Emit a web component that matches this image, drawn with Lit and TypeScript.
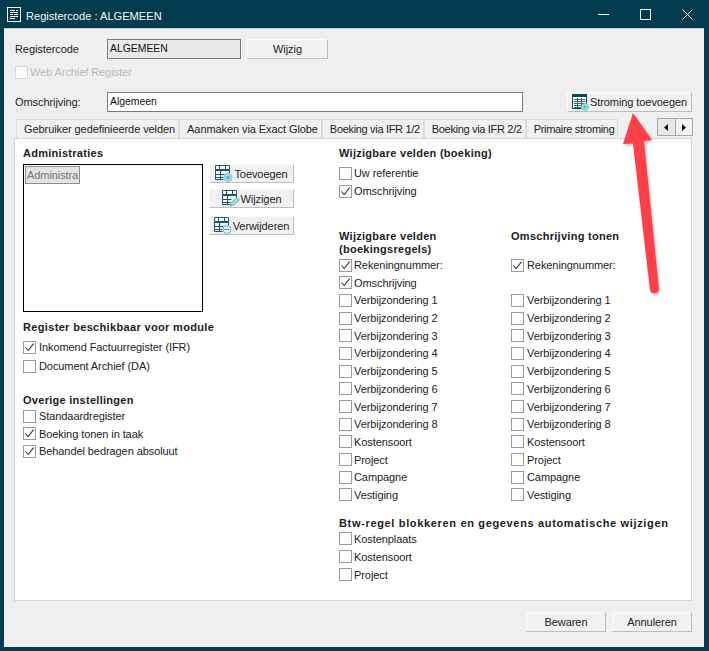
import { LitElement, html, css, svg } from "lit";
import { customElement } from "lit/decorators.js";

const denseIcon = () => html`<svg width="17" height="17" viewBox="0 0 17 17">
  <rect x=".5" y=".5" width="14" height="14" fill="#fff" stroke="#0d4a5c"/>
  <rect x="1" y="1" width="13" height="2" fill="#0d4a5c"/>
  <path d="M2 5.5h11M2 7.5h11M2 9.5h11M2 11.5h11M2 13.5h11M5.5 4v10M9.5 4v10" stroke="#2f6678" fill="none"/>
  <circle cx="13" cy="13" r="3.5" fill="#a5dde4" stroke="#7ccbd5"/>
  <circle cx="13" cy="13" r="1.5" fill="#56b5c3"/>
</svg>`;

const lineIcon = (badge: "plus" | "pen" | "minus") => html`<svg width="18" height="17" viewBox="0 0 18 17">
  <path d="M.5 .5h14v4h-14zM.5 4.5v10h8M14.5 4.5v4M.5 5.5h14M.5 9.5h9M.5 12.5h8M5.5 5.5v9M4.5 .5v4M10.5 .5v4" fill="#fff" stroke="#1e5668"/>
  ${badge === "plus" ? svg`<circle cx="13" cy="12.5" r="4" fill="#a5dde4" stroke="#7ccbd5"/><circle cx="13" cy="12.5" r="1.7" fill="#56b5c3"/>` : ""}
  ${badge === "minus" ? svg`<circle cx="13" cy="12.5" r="4" fill="#e4f5f7" stroke="#62bbc8"/><path d="M10.5 12.5h5" stroke="#3a98a8"/>` : ""}
  ${badge === "pen" ? svg`<path d="M8.5 16l1-3.5 5.5-5 2.3 2.4-5.4 5z" fill="#a5dde4" stroke="#69b2c0"/>` : ""}
</svg>`;

@customElement("app-root")
export class AppRoot extends LitElement {
  static styles = css`
    :host { display: block; width: 709px; height: 651px; background: #003c4e; position: relative; overflow: hidden;
      font-family: "Liberation Sans", Arial, sans-serif; font-size: 11px; letter-spacing: -0.08px; color: #222; }
    .title { height: 28px; display: flex; align-items: center; color: #f4f8f9; font-size: 11.1px; letter-spacing: 0; padding-left: 7px; gap: 4px; }
    .title .name { flex: 1; padding-top: 3px; }
    .ticon { margin-top: 2px; }
    .ctl { width: 42px; height: 28px; display: flex; align-items: center; justify-content: center; }
    .ctls { display: flex; margin-right: 1px; }
    .win { margin: 0 5px 0 4px; height: 619px; background: #efefef; border-top: 1px solid #c8c8c8; box-sizing: border-box; padding: 10px 12px 0 10px; display: flex; flex-direction: column; }
    .r1 { display: flex; align-items: center; height: 20px; padding-left: 1px; }
    .lab { width: 92px; }
    .ro { width: 134px; height: 20px; box-sizing: border-box; border: 1px solid #7a7a7a; background: #e9e9e9; padding-left: 2px; line-height: 18px; color: #111; font-size: 10.4px; letter-spacing: 0; }
    .btn { box-sizing: border-box; height: 20px; background: #f1f1f1; border: 1px solid; border-color: #fbfbfb #bdbdbd #bdbdbd #fbfbfb; display: flex; align-items: center; justify-content: center; color: #222; white-space: nowrap; }
    .wijzig { width: 81px; margin-left: 6px; }
    .webarch { margin-top: 6px; height: 14px; display: flex; align-items: center; gap: 2px; color: #b9b9b9; padding-left: 1px; }
    .box { width: 13px; height: 13px; box-sizing: border-box; border: 1px solid #9a9a9a; background: #fff; flex: none; display: block; }
    .box.dis { border-color: #d5d5d5; }
    .r3 { margin-top: 13px; }
    .in { width: 416px; height: 20px; box-sizing: border-box; border: 1px solid #7a7a7a; background: #fff; padding-left: 2px; line-height: 18px; color: #111; font-size: 10.4px; letter-spacing: 0; }
    .stro { width: 125px; margin-left: 44px; gap: 1px; justify-content: flex-start; padding-left: 4px; }
    .tabrow { display: flex; margin-top: 7px; height: 19px; padding-left: 2px; }
    .tab { height: 19px; box-sizing: border-box; padding: 0 3px 0 7px; display: flex; align-items: center; background: #f1f1f1; border: 1px solid #dcdcdc; border-bottom: none; white-space: nowrap; }
    .tab.tight { letter-spacing: -0.32px; }
    .spin { margin-left: auto; margin-right: -1px; margin-top: -1px; display: flex; height: 18px; border: 1px solid #a8a8a8; box-sizing: border-box; width: 36px; background: #e8e8e8; }
    .spin span { flex: 1; display: flex; align-items: center; justify-content: center; }
    .spin span + span { border-left: 1px solid #a8a8a8; background: #f1f1f1; }
    .panel { width: 678px; height: 463px; box-sizing: border-box; background: #fff; border: 1px solid #d6d6d6; display: grid; grid-template-columns: 316px 1fr; padding: 8px 0 0 8px; }
    h4 { margin: 0; font-size: 11px; font-weight: bold; line-height: 13px; letter-spacing: 0.28px; color: #1c1c1c; }
    .row { height: 18px; display: flex; align-items: center; gap: 2px; white-space: nowrap; }
    .left .row, .grid .row:nth-child(even) { gap: 3px; }
    .row.tall { height: 20px; }
    .adm { display: grid; grid-template-columns: 180px 85px; column-gap: 6px; margin-top: 4px; }
    .list { height: 148px; box-sizing: border-box; border: 1px solid #000; background: #fff; padding: 1px; }
    .item { display: inline-block; background: #e4e4e4; border: 1px solid #8d8d8d; color: #777; padding: 1px 1px; line-height: 14px; }
    .acts { display: flex; flex-direction: column; }
    .act { height: 19px; gap: 1px; }
    .a2 { margin-top: 6px; }
    .a3 { margin-top: 8px; }
    .s1 { margin-top: 9px; margin-bottom: 3px; letter-spacing: 0.34px; }
    .s2 { margin-top: 19px; }
    .s2 + .row + .row, .s2 + .row + .row + .row { margin-top: -0.5px; }
    .g { margin-bottom: 4px; }
    .sp1 { margin-top: 30px; display: grid; grid-template-columns: 172px 172px; }
    .grid { display: grid; grid-template-columns: 172px 172px; grid-auto-rows: 17.7px; }
    .sp2 { margin-top: 13px; letter-spacing: 0.66px; }
    .foot { display: flex; justify-content: flex-end; gap: 6px; margin-top: 11px; padding-right: 0; }
    .foot .btn { width: 80px; }
    .arrow { position: absolute; left: 610px; top: 110px; pointer-events: none; overflow: visible; }
  `;

  box(checked: boolean, dis = false) {
    return html`<svg class="box ${dis ? "dis" : ""}" viewBox="0 0 11 11">${checked ? svg`<path d="M1.5 5.5l2.7 3L9.6 1.6" fill="none" stroke="#333" stroke-width="1.1"/>` : ""}</svg>`;
  }
  row(t: string, checked = false, tall = false) {
    return html`<div class="row ${tall ? "tall" : ""}">${this.box(checked)}<span>${t}</span></div>`;
  }

  render() {
    const tabs = ["Gebruiker gedefinieerde velden", "Aanmaken via Exact Globe", "Boeking via IFR 1/2", "Boeking via IFR 2/2", "Primaire stroming"];
    const common = ["Verbijzondering 1", "Verbijzondering 2", "Verbijzondering 3", "Verbijzondering 4", "Verbijzondering 5", "Verbijzondering 6", "Verbijzondering 7", "Verbijzondering 8", "Kostensoort", "Project", "Campagne", "Vestiging"];
    const shape = "M23 3L13 34l10-0.5L40 180a4.6 4.6 0 0 0 9-1L34 31l8-1z";
    return html`
      <div class="title">
        <svg class="ticon" width="15" height="16" viewBox="0 0 15 16"><rect x=".5" y=".5" width="13" height="14" fill="none" stroke="#fff"/><path d="M3 3.5h5M9 3.5h2M3 5.5h8M3 7.5h3M7 7.5h4M3 9.5h8M3 11.5h5" stroke="#fff"/></svg>
        <span class="name">Registercode : ALGEMEEN</span>
        <div class="ctls">
          <div class="ctl"><svg width="11" height="11" viewBox="0 0 11 11"><path d="M0 5.5h11" stroke="#fff"/></svg></div>
          <div class="ctl"><svg width="11" height="11" viewBox="0 0 11 11"><rect x=".5" y=".5" width="10" height="10" fill="none" stroke="#fff"/></svg></div>
          <div class="ctl"><svg width="11" height="11" viewBox="0 0 11 11"><path d="M.5.5l10 10M10.5.5l-10 10" stroke="#fff"/></svg></div>
        </div>
      </div>
      <div class="win">
        <div class="r1"><span class="lab">Registercode</span><div class="ro">ALGEMEEN</div><div class="btn wijzig">Wijzig</div></div>
        <div class="webarch">${this.box(false, true)}<span>Web Archief Register</span></div>
        <div class="r1 r3"><span class="lab">Omschrijving:</span><div class="in">Algemeen</div><div class="btn stro">${denseIcon()}<span>Stroming toevoegen</span></div></div>
        <div class="tabrow">
          ${tabs.map((t, i) => html`<div class="tab ${i > 1 ? "tight" : ""}">${t}</div>`)}
          <div class="spin">
            <span><svg width="5" height="7" viewBox="0 0 5 7"><path d="M4 0v7L0 3.5z" fill="#111"/></svg></span>
            <span><svg width="5" height="7" viewBox="0 0 5 7"><path d="M1 0v7l4-3.5z" fill="#111"/></svg></span>
          </div>
        </div>
        <div class="panel">
          <div class="left">
            <h4>Administraties</h4>
            <div class="adm">
              <div class="list"><span class="item">Administra</span></div>
              <div class="acts">
                <div class="btn act">${lineIcon("plus")}<span>Toevoegen</span></div>
                <div class="btn act a2">${lineIcon("pen")}<span>Wijzigen</span></div>
                <div class="btn act a3">${lineIcon("minus")}<span>Verwijderen</span></div>
              </div>
            </div>
            <h4 class="s1">Register beschikbaar voor module</h4>
            ${this.row("Inkomend Factuurregister (IFR)", true, true)}
            ${this.row("Document Archief (DA)")}
            <h4 class="s2">Overige instellingen</h4>
            ${this.row("Standaardregister")}
            ${this.row("Boeking tonen in taak", true)}
            ${this.row("Behandel bedragen absoluut", true)}
          </div>
          <div>
            <h4 class="g">Wijzigbare velden (boeking)</h4>
            ${this.row("Uw referentie")}
            ${this.row("Omschrijving", true)}
            <div class="sp1">
              <h4>Wijzigbare velden<br />(boekingsregels)</h4>
              <h4>Omschrijving tonen</h4>
            </div>
            <div class="grid">
              ${this.row("Rekeningnummer:", true)}${this.row("Rekeningnummer:", true)}
              ${this.row("Omschrijving", true)}<div></div>
              ${common.map((c) => html`${this.row(c)}${this.row(c)}`)}
            </div>
            <h4 class="sp2">Btw-regel blokkeren en gegevens automatische wijzigen</h4>
            ${this.row("Kostenplaats")}
            ${this.row("Kostensoort")}
            ${this.row("Project")}
          </div>
        </div>
        <div class="foot"><div class="btn">Bewaren</div><div class="btn">Annuleren</div></div>
      </div>
      <svg class="arrow" width="60" height="190" viewBox="0 0 60 190">
        <defs><filter id="s" x="-30%" y="-10%" width="160%" height="120%"><feGaussianBlur stdDeviation="1.5"/></filter></defs>
        <path d="${shape}" transform="translate(1 2)" fill="#777" opacity=".45" filter="url(#s)"/>
        <path d="${shape}" fill="#ff4048"/>
      </svg>
    `;
  }
}
